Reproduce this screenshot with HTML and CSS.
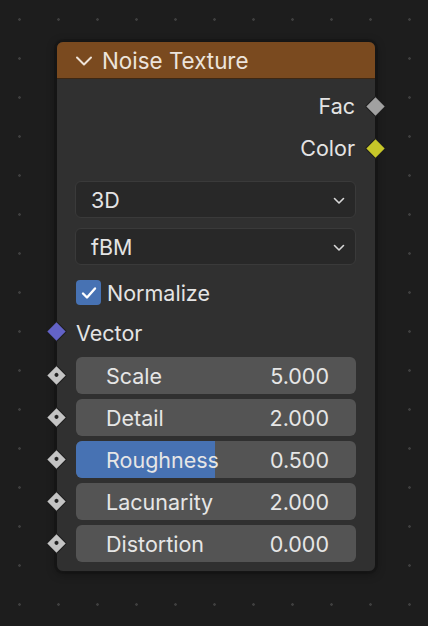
FILE: index.html
```html
<!DOCTYPE html>
<html>
<head>
<meta charset="utf-8">
<link rel="stylesheet" href="styles.css">
</head>
<body>
<div class="canvas">
  <div class="node">
    <div class="node-header">
      <svg class="hdr-chev" width="18" height="12" viewBox="0 0 18 12"><path d="M2 2.5 L9 9.5 L16 2.5" fill="none" stroke="#eee3d8" stroke-width="2" stroke-linecap="round" stroke-linejoin="round"/></svg>
      <span class="node-title">Noise Texture</span>
    </div>
    <div class="node-body">
      <div class="row out">Fac<span class="sock sock-out sock-fac"></span></div>
      <div class="row out">Color<span class="sock sock-out sock-color"></span></div>
      <div class="dropdown dd-first"><span>3D</span>
        <svg width="12" height="8" viewBox="0 0 12 8"><path d="M1.5 1.5 L6 6 L10.5 1.5" fill="none" stroke="#d8d8d8" stroke-width="1.6" stroke-linecap="round" stroke-linejoin="round"/></svg>
      </div>
      <div class="dropdown"><span>fBM</span>
        <svg width="12" height="8" viewBox="0 0 12 8"><path d="M1.5 1.5 L6 6 L10.5 1.5" fill="none" stroke="#d8d8d8" stroke-width="1.6" stroke-linecap="round" stroke-linejoin="round"/></svg>
      </div>
      <div class="row check-row">
        <span class="checkbox"><svg width="18" height="16" viewBox="0 0 18 16"><path d="M3 8.5 L7 12.5 L15 3.5" fill="none" stroke="#ffffff" stroke-width="2.4" stroke-linecap="round" stroke-linejoin="round"/></svg></span>
        <span>Normalize</span>
      </div>
      <div class="row in">Vector<span class="sock sock-in sock-vec"></span></div>
      <div class="sliders">
        <div class="slider"><span class="sock sock-in sock-gray"></span><span class="lbl">Scale</span><span class="val">5.000</span></div>
        <div class="slider"><span class="sock sock-in sock-gray"></span><span class="lbl">Detail</span><span class="val">2.000</span></div>
        <div class="slider"><span class="fill" style="width:49.5%"></span><span class="sock sock-in sock-gray"></span><span class="lbl">Roughness</span><span class="val">0.500</span></div>
        <div class="slider"><span class="sock sock-in sock-gray"></span><span class="lbl">Lacunarity</span><span class="val">2.000</span></div>
        <div class="slider"><span class="sock sock-in sock-gray"></span><span class="lbl">Distortion</span><span class="val">0.000</span></div>
      </div>
    </div>
  </div>
</div>
</body>
</html>
```

FILE: styles.css
```css
html, body {
  margin: 0;
  padding: 0;
}
body {
  width: 428px;
  height: 626px;
  overflow: hidden;
  background-color: #1d1d1d;
  background-image: radial-gradient(circle at 19.5px 19.5px, #3e3e3e 0, #3e3e3e 1px, rgba(0,0,0,0) 1.6px);
  background-size: 39px 39px;
  font-family: Inter, "Noto Sans", sans-serif;
  color: #e4e4e4;
}
.canvas {
  padding: 41px 0 0 56px;
}
.node {
  width: 320px;
  height: 531px;
  box-sizing: border-box;
  border: 1px solid #151515;
  border-radius: 7px;
  background: #303030;
  box-shadow: 0 0 0 2px rgba(0,0,0,0.12), 0 2px 10px rgba(0,0,0,0.35);
  position: relative;
}
.node-header {
  height: 37px;
  box-sizing: border-box;
  background: #7a4a1f;
  border-radius: 6px 6px 0 0;
  border-bottom: 1px solid #3d2713;
  display: flex;
  align-items: center;
  padding-left: 18px;
  gap: 9px;
}
.hdr-chev {
  display: block;
  margin-top: 1px;
}
.node-title {
  font-size: 22.4px;
  color: #ece4dc;
}
.node-body {
  padding: 6px 19px 0 18px;
}
.row {
  height: 42px;
  display: flex;
  align-items: center;
  font-size: 21.5px;
  position: relative;
}
.row.out {
  justify-content: flex-end;
  padding-right: 1px;
}
.sock {
  position: absolute;
  width: 15px;
  height: 15px;
  transform: rotate(45deg);
  box-sizing: border-box;
  border: 1.5px solid #1e1e1e;
  border-radius: 1px;
}
.sock-out {
  right: -27px;
  top: 13.5px;
}
.sock-in {
  left: -26px;
  top: 13.5px;
}
.sock-fac { background: #a1a1a1; }
.sock-color { background: #c7c729; }
.sock-vec { background: #6363c7; }
.sock-gray {
  background: #c4c4c4;
  top: 11px;
  left: -27px;
}
.sock-gray::after {
  content: "";
  position: absolute;
  width: 4px;
  height: 4px;
  border-radius: 50%;
  background: #222;
  left: 4px;
  top: 4px;
}
.dropdown {
  height: 37px;
  box-sizing: border-box;
  border: 1px solid #3a3a3a;
  border-radius: 6px;
  background: #282828;
  display: flex;
  align-items: center;
  justify-content: space-between;
  padding: 0 10px 0 15px;
  font-size: 21.5px;
  margin-bottom: 10px;
}
.dropdown svg {
  display: block;
  margin-top: 2px;
}
.dd-first {
  margin-top: 12px;
}
.check-row {
  height: 35px;
  gap: 6px;
  padding-left: 1px;
}
.checkbox {
  width: 25px;
  height: 25px;
  border-radius: 4px;
  background: #4772b3;
  display: flex;
  align-items: center;
  justify-content: center;
}
.checkbox svg { display: block; }
.row.in {
  height: 46px;
  padding-left: 1px;
}
.sliders {
  display: flex;
  flex-direction: column;
  gap: 5px;
  margin-top: 1px;
}
.slider {
  position: relative;
  height: 37px;
  border-radius: 6px;
  background: #545454;
  display: flex;
  align-items: center;
  justify-content: space-between;
  padding: 0 27px 0 30px;
  font-size: 21.5px;
  color: #e6e6e6;
  margin: 0 0 0 1px;
}
.slider .lbl, .slider .val {
  position: relative;
}
.fill {
  position: absolute;
  left: 0;
  top: 0;
  bottom: 0;
  background: #4772b3;
  border-radius: 6px 0 0 6px;
}
```
